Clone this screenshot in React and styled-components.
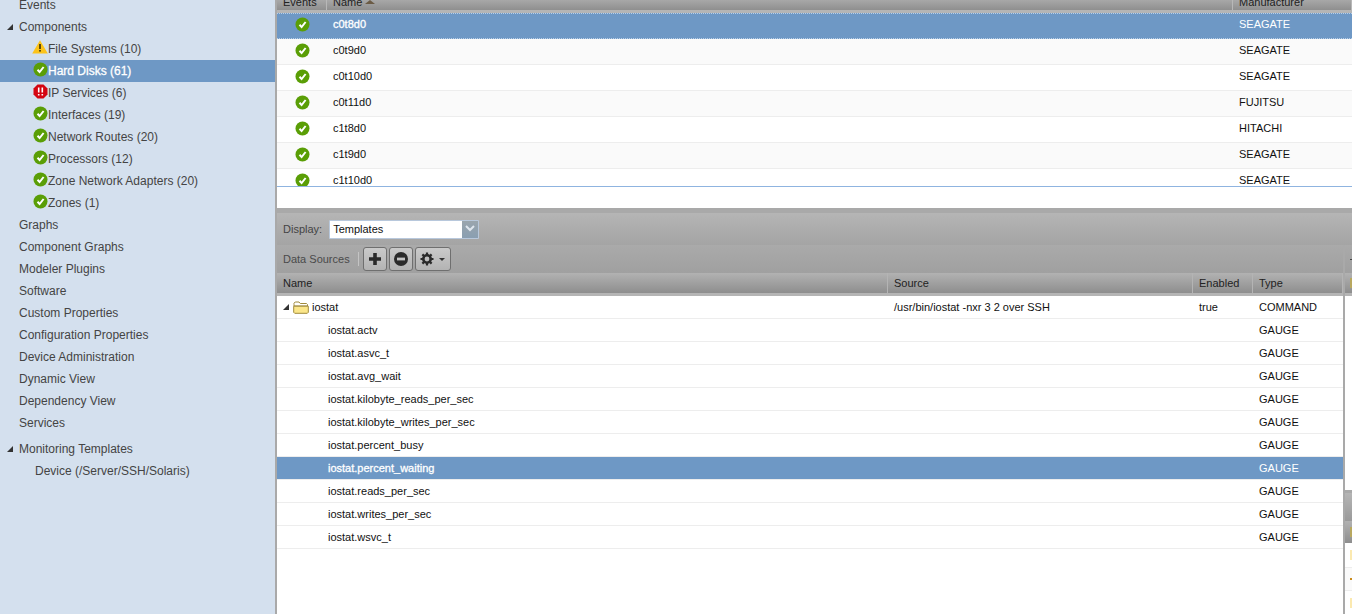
import React from "react";
import styled, { createGlobalStyle } from "styled-components";

const Global = createGlobalStyle`
  html, body {
    margin: 0;
    height: 100%;
    overflow: hidden;
    background: #fff;
    font-family: "Liberation Sans", Arial, sans-serif;
    font-size: 12px;
  }
`;

const Page = styled.div`
  width: 1352px;
  height: 614px;
  display: flex;
  overflow: hidden;
`;

const Sidebar = styled.nav`
  width: 275px;
  flex: none;
  background: #d4e0ee;
  border-right: 2px solid #a9a9a9;
  color: #444;
  margin-top: -6px;
`;

const NavItem = styled.div`
  height: 22px;
  display: flex;
  align-items: center;
  padding-left: ${(p) => p.$indent}px;
  background: ${(p) => (p.$active ? "#6e98c5" : "transparent")};
  color: ${(p) => (p.$active ? "#fff" : "#444")};
  -webkit-text-stroke: ${(p) => (p.$active ? "0.3px #fff" : "0")};
  margin-top: ${(p) => p.$gap || 0}px;
`;

const Arrow = styled.svg`
  width: 6px;
  height: 6px;
  flex: none;
  margin-right: ${(p) => p.$space}px;
`;

const IconSlot = styled.span`
  width: 15px;
  height: 15px;
  flex: none;
  display: block;
  margin-top: -3px;
`;

const WarnSvg = styled.svg`
  display: block;
  margin-left: -1px;
`;

const Main = styled.main`
  flex: 1;
  display: flex;
  flex-direction: column;
  min-width: 0;
  font-size: 11px;
`;

const TopGrid = styled.section`
  height: 208px;
  flex: none;
  display: flex;
  flex-direction: column;
  background: #fff;
`;

const TopHeader = styled.div`
  height: 10px;
  flex: none;
  display: grid;
  grid-template-columns: 50px 906px 1fr;
  background: linear-gradient(#a8a8a8, #8f8f8f);
  border-bottom: 3px solid #b5b5b5;
`;

const TopHeaderCell = styled.div`
  height: 10px;
  padding-left: ${(p) => p.$pad}px;
  border-right: 1px solid #b8b8b8;
  color: #222;
  overflow: hidden;
  display: flex;
  align-items: flex-end;
  gap: 3px;
  span {
    line-height: 12px;
    margin-bottom: 2px;
  }
`;

const SortMark = styled.i`
  width: 0;
  height: 0;
  margin-bottom: 6px;
  border-left: 5px solid transparent;
  border-right: 5px solid transparent;
  border-bottom: 4px solid #6b5b45;
`;

const TopRows = styled.div`
  height: 173px;
  flex: none;
  overflow: hidden;
  border-bottom: 1px solid #8fb4e0;
`;

const TopRow = styled.div`
  height: 26px;
  box-sizing: border-box;
  padding-bottom: 3px;
  display: grid;
  grid-template-columns: 50px 906px 1fr;
  align-items: center;
  border-top: 1px ${(p) => (p.$active ? "dotted #b8cfe8" : "solid transparent")};
  border-bottom: 1px ${(p) => (p.$active ? "dotted #b8cfe8" : "solid #ededed")};
  background: ${(p) => (p.$active ? "#6e98c5" : p.$alt ? "#fafafa" : "#fff")};
  color: ${(p) => (p.$active ? "#fff" : "#111")};
`;

const EventCell = styled.div`
  display: flex;
  justify-content: center;
  svg {
    display: block;
  }
`;

const NameCell = styled.div`
  padding-left: 6px;
  margin-bottom: 2px;
  -webkit-text-stroke: ${(p) => (p.$active ? "0.3px #fff" : "0")};
`;

const MakerCell = styled.div`
  padding-left: 6px;
  margin-bottom: 2px;
`;

const TopSpacer = styled.div`
  flex: 1;
  background: #fff;
`;

const Splitter = styled.div`
  height: 5px;
  flex: none;
  background: #a9a9a9;
`;

const DisplayBar = styled.div`
  height: 32px;
  flex: none;
  display: flex;
  align-items: center;
  gap: 6px;
  padding-left: 6px;
  background: linear-gradient(#b5b5b5, #a4a4a4);
  color: #444;
`;

const Select = styled.div`
  width: 150px;
  height: 19px;
  margin-left: 1px;
  display: flex;
  border: 1px solid #b8c8dc;
  border-radius: 1px;
  background: #fff;
  box-sizing: border-box;
`;

const SelectText = styled.div`
  flex: 1;
  line-height: 17px;
  padding-left: 3px;
  color: #111;
`;

const SelectButton = styled.div`
  width: 16px;
  display: flex;
  align-items: center;
  justify-content: center;
  background: linear-gradient(#9aa5ad, #8a9fb2);
`;

const Lower = styled.div`
  flex: 1;
  display: flex;
  min-height: 0;
`;

const LowerMain = styled.section`
  width: 1066px;
  flex: none;
  display: flex;
  flex-direction: column;
  border-right: 2px solid #a9a9a9;
`;

const ToolBar = styled.div`
  height: 28px;
  flex: none;
  display: flex;
  align-items: center;
  padding-left: 6px;
  background: linear-gradient(#aaa, #a0a0a0);
  color: #4a4a4a;
`;

const Divider = styled.i`
  width: 1px;
  height: 14px;
  margin: 0 4px 0 8px;
  background: #c4c4c4;
`;

const ToolButton = styled.button`
  width: ${(p) => p.$w || 24}px;
  height: 24px;
  padding: 0;
  margin-right: 2px;
  display: flex;
  align-items: center;
  justify-content: center;
  gap: 5px;
  box-sizing: border-box;
  border: 1px solid #6f6f6f;
  border-radius: 3px;
  background: linear-gradient(#cacaca, #b3b3b3);
`;

const Caret = styled.i`
  width: 0;
  height: 0;
  border-left: 3px solid transparent;
  border-right: 3px solid transparent;
  border-top: 3px solid #333;
`;

const GridHeader = styled.div`
  height: 20px;
  flex: none;
  display: grid;
  grid-template-columns: 611px 305px 60px 1fr;
  background: linear-gradient(#b2b2b2, #8e8e8e);
  border-bottom: 3px solid #b5b5b5;
  color: #222;
`;

const GridHeaderCell = styled.div`
  line-height: 20px;
  padding-left: 6px;
  border-right: 1px solid #b4b4b4;
`;

const Row = styled.div`
  height: 22px;
  flex: none;
  display: grid;
  grid-template-columns: 611px 305px 60px 1fr;
  align-items: center;
  border-bottom: 1px solid #ededed;
  background: ${(p) => (p.$active ? "#6e98c5" : "#fff")};
  color: ${(p) => (p.$active ? "#fff" : "#111")};
`;

const TreeCell = styled.div`
  display: flex;
  align-items: center;
  padding-left: ${(p) => p.$indent}px;
  -webkit-text-stroke: ${(p) => (p.$active ? "0.3px #fff" : "0")};
`;

const Cell = styled.div`
  padding-left: 6px;
  white-space: nowrap;
`;

const Folder = styled.svg`
  width: 16px;
  height: 13px;
  margin: 0 3px 0 4px;
  flex: none;
`;

const Filler = styled.div`
  flex: 1;
  background: #fff;
`;

const SidePanel = styled.aside`
  flex: 1;
  display: flex;
  flex-direction: column;
  background: #fff;
  overflow: hidden;
`;

const SideBand = styled.div`
  height: ${(p) => p.$h}px;
  flex: none;
  display: flex;
  align-items: center;
  justify-content: flex-end;
  box-sizing: border-box;
  background: ${(p) => p.$bg};
  border-bottom: ${(p) => (p.$line ? `${p.$line}` : "none")};
`;

const SideMark = styled.i`
  width: ${(p) => p.$w}px;
  height: ${(p) => p.$tall}px;
  background: ${(p) => p.$color};
`;

const Check = () => (
  <svg viewBox="0 0 15 15" width="15" height="15">
    <circle cx="7.5" cy="7.5" r="7" fill="#5a9e06" />
    <path d="M4.5 7.8 6.6 10 10.6 5" fill="none" stroke="#fff" strokeWidth="2" />
  </svg>
);

const Warning = () => (
  <WarnSvg viewBox="0 0 16 14" width="16" height="14">
    <path d="M8 .3 15.8 13.5H.2Z" fill="#fcc31a" />
    <rect x="7.2" y="4" width="1.6" height="5" fill="#3b2e05" />
    <rect x="7.2" y="10" width="1.6" height="1.6" fill="#3b2e05" />
  </WarnSvg>
);

const Critical = () => (
  <svg viewBox="0 0 15 15" width="15" height="15">
    <path d="M4.5 .5h6l4 4v6l-4 4h-6l-4-4v-6Z" fill="#d40511" />
    <path d="M5.7 3.5v5M9.3 3.5v5M5.7 10v1.6M9.3 10v1.6" stroke="#fff" strokeWidth="1.6" />
  </svg>
);

const TreeArrow = ({ space }) => (
  <Arrow viewBox="0 0 6 6" $space={space}>
    <path d="M6 0V6H0Z" fill="#333" />
  </Arrow>
);

const icons = { ok: <Check />, warn: <Warning />, crit: <Critical /> };

const components = [
  ["warn", "File Systems (10)"],
  ["ok", "Hard Disks (61)", true],
  ["crit", "IP Services (6)"],
  ["ok", "Interfaces (19)"],
  ["ok", "Network Routes (20)"],
  ["ok", "Processors (12)"],
  ["ok", "Zone Network Adapters (20)"],
  ["ok", "Zones (1)"],
];

const plainLinks = [
  "Graphs",
  "Component Graphs",
  "Modeler Plugins",
  "Software",
  "Custom Properties",
  "Configuration Properties",
  "Device Administration",
  "Dynamic View",
  "Dependency View",
  "Services",
];

const disks = [
  ["c0t8d0", "SEAGATE"],
  ["c0t9d0", "SEAGATE"],
  ["c0t10d0", "SEAGATE"],
  ["c0t11d0", "FUJITSU"],
  ["c1t8d0", "HITACHI"],
  ["c1t9d0", "SEAGATE"],
  ["c1t10d0", "SEAGATE"],
];

const sources = [
  "iostat.actv",
  "iostat.asvc_t",
  "iostat.avg_wait",
  "iostat.kilobyte_reads_per_sec",
  "iostat.kilobyte_writes_per_sec",
  "iostat.percent_busy",
  "iostat.percent_waiting",
  "iostat.reads_per_sec",
  "iostat.writes_per_sec",
  "iostat.wsvc_t",
];

export default function App() {
  return (
    <Page>
      <Global />
      <Sidebar>
        <NavItem $indent={19}>Events</NavItem>
        <NavItem $indent={7}>
          <TreeArrow space={6} />
          Components
        </NavItem>
        {components.map(([icon, label, active]) => (
          <NavItem key={label} $indent={33} $active={active}>
            <IconSlot>{icons[icon]}</IconSlot>
            {label}
          </NavItem>
        ))}
        {plainLinks.map((label) => (
          <NavItem key={label} $indent={19}>
            {label}
          </NavItem>
        ))}
        <NavItem $indent={7} $gap={4}>
          <TreeArrow space={6} />
          Monitoring Templates
        </NavItem>
        <NavItem $indent={35}>Device (/Server/SSH/Solaris)</NavItem>
      </Sidebar>
      <Main>
        <TopGrid>
          <TopHeader>
            <TopHeaderCell $pad={6}>
              <span>Events</span>
            </TopHeaderCell>
            <TopHeaderCell $pad={6}>
              <span>Name</span>
              <SortMark />
            </TopHeaderCell>
            <TopHeaderCell $pad={6}>
              <span>Manufacturer</span>
            </TopHeaderCell>
          </TopHeader>
          <TopRows>
            {disks.map(([name, maker], i) => (
              <TopRow key={name} $active={i === 0} $alt={i % 2 === 1}>
                <EventCell>
                  <Check />
                </EventCell>
                <NameCell $active={i === 0}>{name}</NameCell>
                <MakerCell>{maker}</MakerCell>
              </TopRow>
            ))}
          </TopRows>
          <TopSpacer />
        </TopGrid>
        <Splitter />
        <DisplayBar>
          Display:
          <Select>
            <SelectText>Templates</SelectText>
            <SelectButton>
              <svg viewBox="0 0 10 8" width="10" height="8">
                <path d="M1 1 5 5 9 1" fill="none" stroke="#dfe6ee" strokeWidth="2" />
              </svg>
            </SelectButton>
          </Select>
        </DisplayBar>
        <Lower>
          <LowerMain>
            <ToolBar>
              Data Sources
              <Divider />
              <ToolButton aria-label="Add">
                <svg viewBox="0 0 14 14" width="14" height="14">
                  <path d="M7 1v12M1 7h12" stroke="#2b2b2b" strokeWidth="3.6" />
                </svg>
              </ToolButton>
              <ToolButton aria-label="Remove">
                <svg viewBox="0 0 14 14" width="14" height="14">
                  <circle cx="7" cy="7" r="7" fill="#2b2b2b" />
                  <rect x="3" y="5.6" width="8" height="2.8" fill="#c4c4c4" />
                </svg>
              </ToolButton>
              <ToolButton $w={36} aria-label="Settings">
                <svg viewBox="0 0 14 14" width="14" height="14">
                  <circle cx="7" cy="7" r="3.7" fill="none" stroke="#2b2b2b" strokeWidth="2.6" />
                  <path
                    d="M7 .5v3M7 10.5v3M.5 7h3M10.5 7h3M2.4 2.4l2.1 2.1M9.5 9.5l2.1 2.1M11.6 2.4 9.5 4.5M4.5 9.5l-2.1 2.1"
                    stroke="#2b2b2b"
                    strokeWidth="2.2"
                  />
                </svg>
                <Caret />
              </ToolButton>
            </ToolBar>
            <GridHeader>
              <GridHeaderCell>Name</GridHeaderCell>
              <GridHeaderCell>Source</GridHeaderCell>
              <GridHeaderCell>Enabled</GridHeaderCell>
              <GridHeaderCell>Type</GridHeaderCell>
            </GridHeader>
            <Row>
              <TreeCell $indent={6}>
                <TreeArrow space={0} />
                <Folder viewBox="0 0 16 13">
                  <path d="M1 3.5V2.2L2.2 1H6l1.3 1.5h6.2l1 1V5H1Z" fill="#fff" stroke="#a08a3c" />
                  <path d="M.7 5.2h14.6v6.1l-1 1H1.7l-1-1Z" fill="#fbe68a" stroke="#a08a3c" />
                </Folder>
                iostat
              </TreeCell>
              <Cell>/usr/bin/iostat -nxr 3 2 over SSH</Cell>
              <Cell>true</Cell>
              <Cell>COMMAND</Cell>
            </Row>
            {sources.map((name) => {
              const active = name === "iostat.percent_waiting";
              return (
                <Row key={name} $active={active}>
                  <TreeCell $indent={51} $active={active}>
                    {name}
                  </TreeCell>
                  <Cell />
                  <Cell />
                  <Cell>GAUGE</Cell>
                </Row>
              );
            })}
            <Filler />
          </LowerMain>
          <SidePanel>
            <SideBand $h={28} $bg="linear-gradient(#aaa, #a0a0a0)">
              <SideMark $w={2} $tall={1} $color="#444" />
            </SideBand>
            <SideBand $h={23} $bg="linear-gradient(#b2b2b2, #8e8e8e)" $line="3px solid #b5b5b5">
              <SideMark $w={2} $tall={10} $color="#b8a860" />
            </SideBand>
            <SideBand $h={194} $bg="#fff" />
            <SideBand $h={3} $bg="#a9a9a9" />
            <SideBand $h={28} $bg="linear-gradient(#b5b5b5, #9a9a9a)" />
            <SideBand $h={22} $bg="linear-gradient(#b2b2b2, #8e8e8e)">
              <SideMark $w={2} $tall={10} $color="#b8a860" />
            </SideBand>
            <SideBand $h={25} $bg="#fff" $line="1px solid #ededed">
              <SideMark $w={2} $tall={10} $color="#fbe9b0" />
            </SideBand>
            <SideBand $h={23} $bg="#fafafa" $line="1px solid #ededed">
              <SideMark $w={2} $tall={2} $color="#c98a1a" />
            </SideBand>
            <SideBand $h={23} $bg="#fff">
              <SideMark $w={2} $tall={10} $color="#fbe9b0" />
            </SideBand>
          </SidePanel>
        </Lower>
      </Main>
    </Page>
  );
}
